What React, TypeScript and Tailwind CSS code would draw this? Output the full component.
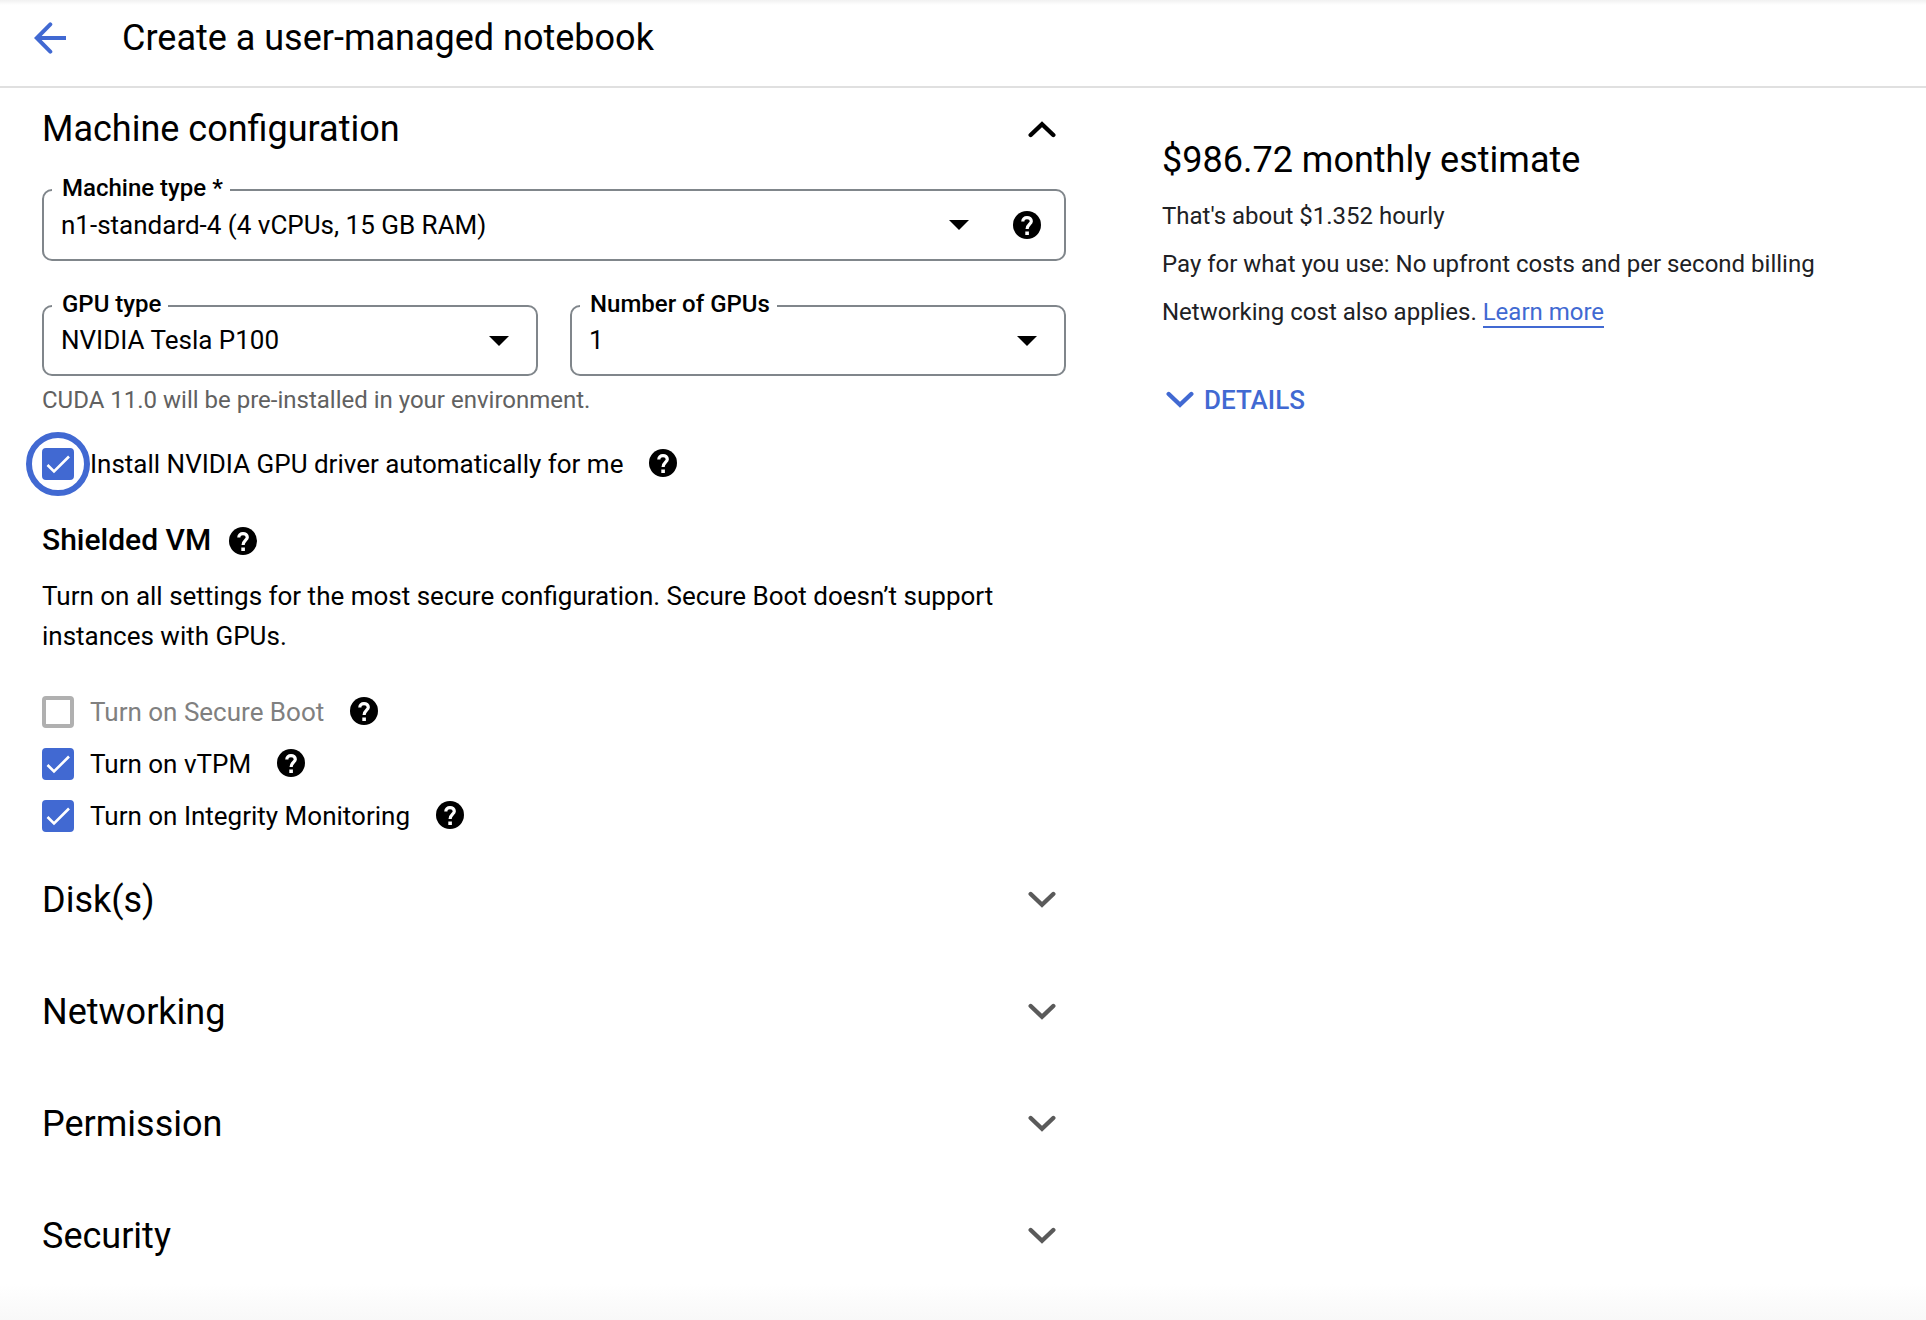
import React, { useId, useState } from "react";

type IconProps = { className?: string };

function ArrowBackIcon({ className = "" }: IconProps) {
  return (
    <svg
      viewBox="0 0 32 32"
      fill="none"
      stroke="currentColor"
      strokeWidth="4"
      aria-hidden="true"
      className={className}
    >
      <path d="M4 16H32" />
      <path d="M16.300 2.300L2.800 16L16.300 29.700" strokeLinecap="round" />
    </svg>
  );
}

function ChevronIcon({ up = false, className = "" }: IconProps & { up?: boolean }) {
  return (
    <svg
      viewBox="0 0 28 18"
      fill="none"
      stroke="currentColor"
      strokeWidth="4.4"
      strokeLinecap="round"
      aria-hidden="true"
      className={className}
    >
      <path d={up ? "M2.700 15L14 4.200L25.300 15" : "M2.700 3L14 13.800L25.300 3"} />
    </svg>
  );
}

function CaretIcon({ className = "" }: IconProps) {
  return (
    <svg viewBox="0 0 20 10" fill="currentColor" aria-hidden="true" className={className}>
      <path d="M0 0l10 10L20 0z" />
    </svg>
  );
}

function HelpButton({ label, className = "" }: { label: string; className?: string }) {
  return (
    <button type="button" aria-label={label} className={`size-7 shrink-0 ${className}`}>
      <svg viewBox="0 0 28 28" fill="none" aria-hidden="true" className="size-7">
        <circle cx="14" cy="14" r="14" fill="currentColor" />
        <path
          d="M9.800 10.600C9.800 8 11.600 6.600 14 6.600S18.300 8 18.300 10.300C18.300 13 14.100 13.600 14.100 18"
          stroke="white"
          strokeWidth="3.2"
        />
        <path d="M12.300 20.500h3.600v3.500h-3.600z" fill="white" />
      </svg>
    </button>
  );
}

function SelectField({ label, options, help }: { label: string; options: string[]; help?: string }) {
  const id = useId();
  return (
    <div
      className={`relative flex items-center rounded-[10px] border-2 border-[#80868b] ${help ? "h-[72px]" : "h-[71px]"}`}
    >
      <label
        htmlFor={id}
        className="absolute -top-[17px] left-2 bg-white pr-[7px] pl-[10px] text-[24px] leading-7 font-medium"
      >
        {label}
      </label>
      <select
        id={id}
        className="h-full w-full min-w-0 cursor-pointer appearance-none bg-transparent pl-[17px] text-[26px] outline-none"
      >
        {options.map((option) => (
          <option key={option}>{option}</option>
        ))}
      </select>
      <CaretIcon
        className={`pointer-events-none h-[10px] w-5 shrink-0 ${help ? "mr-11" : "mr-[27px]"}`}
      />
      {help && <HelpButton label={help} className="mr-[23px]" />}
    </div>
  );
}

type CheckProps = {
  label: string;
  help: string;
  initial?: boolean;
  disabled?: boolean;
  ring?: boolean;
};

function CheckRow({ label, help, initial = false, disabled = false, ring = false }: CheckProps) {
  const id = useId();
  const [checked, setChecked] = useState(initial);
  return (
    <div className="flex h-8 items-center">
      <span className="relative size-8 shrink-0">
        <input
          id={id}
          type="checkbox"
          checked={checked}
          disabled={disabled}
          onChange={(event) => setChecked(event.target.checked)}
          className="block size-8 appearance-none rounded-[4px] border-4 border-[#b0b0b0] checked:border-[#4169d2] checked:bg-[#4169d2]"
        />
        {checked && (
          <svg
            viewBox="0 0 32 32"
            fill="none"
            stroke="white"
            strokeWidth="2.6"
            aria-hidden="true"
            className="pointer-events-none absolute inset-0"
          >
            <path d="M5.500 17l6.500 6.500L27 8.500" />
          </svg>
        )}
        {ring && (
          <span className="pointer-events-none absolute -inset-4 rounded-full border-[6px] border-[#4169d2]" />
        )}
      </span>
      <label
        htmlFor={id}
        className={`ml-4 text-[26px] leading-8 ${disabled ? "text-[#808080]" : "text-black"}`}
      >
        {label}
      </label>
      <HelpButton label={help} className="mb-[2px] ml-[26px]" />
    </div>
  );
}

function SectionHeader({ title, open = false }: { title: string; open?: boolean }) {
  return (
    <h2>
      <button
        type="button"
        aria-expanded={open}
        className="flex w-full items-center justify-between pr-[10px] text-left text-[36px] leading-[48px]"
      >
        {title}
        <ChevronIcon up={open} className={`h-[18px] w-7 ${open ? "text-black" : "text-[#5a5a5a]"}`} />
      </button>
    </h2>
  );
}

const collapsedSections = ["Disk(s)", "Networking", "Permission", "Security"];

export default function App() {
  return (
    <div className="flex min-h-screen flex-col bg-white font-[Roboto,sans-serif] text-black">
      <header className="flex h-[88px] items-center border-b-2 border-[#e0e0e0] bg-[linear-gradient(#f1f1f1,#ffffff_5px)] pb-[10px] pl-[34px]">
        <button type="button" aria-label="Back" className="text-[#4169d2]">
          <ArrowBackIcon className="size-8" />
        </button>
        <h1 className="ml-14 text-[36px] leading-[48px]">Create a user-managed notebook</h1>
      </header>

      <div className="grid grid-cols-[minmax(0,1024px)_minmax(0,1fr)] gap-24 px-[42px] pt-[17px]">
        <main>
          <SectionHeader title="Machine configuration" open />
          <div className="mt-9">
            <SelectField
              label="Machine type *"
              options={["n1-standard-4 (4 vCPUs, 15 GB RAM)"]}
              help="About machine types"
            />
          </div>
          <div className="mt-11 grid grid-cols-2 gap-8">
            <SelectField label="GPU type" options={["NVIDIA Tesla P100"]} />
            <SelectField label="Number of GPUs" options={["1", "2", "4"]} />
          </div>
          <p className="mt-2 text-[24px] leading-8 text-[#616161]">
            CUDA 11.0 will be pre-installed in your environment.
          </p>
          <div className="mt-8">
            <CheckRow
              label="Install NVIDIA GPU driver automatically for me"
              help="About driver installation"
              initial
              ring
            />
          </div>

          <div className="mt-10 flex items-end">
            <h3 className="text-[30px] leading-10 font-medium">Shielded VM</h3>
            <HelpButton label="About Shielded VM" className="mb-[5px] ml-[18px]" />
          </div>
          <p className="mt-4 text-[26px] leading-10">
            Turn on all settings for the most secure configuration. Secure Boot doesn’t support
            instances with GPUs.
          </p>
          <div className="mt-10 flex flex-col gap-5">
            <CheckRow label="Turn on Secure Boot" help="About Secure Boot" disabled />
            <CheckRow label="Turn on vTPM" help="About vTPM" initial />
            <CheckRow label="Turn on Integrity Monitoring" help="About Integrity Monitoring" initial />
          </div>

          <div className="mt-11 flex flex-col gap-16">
            {collapsedSections.map((title) => (
              <SectionHeader key={title} title={title} />
            ))}
          </div>
        </main>

        <aside className="pt-[31px]">
          <h2 className="text-[36px] leading-[48px]">$986.72 monthly estimate</h2>
          <div className="mt-2 text-[24px] leading-[48px] text-[#202124]">
            <p>That's about $1.352 hourly</p>
            <p>Pay for what you use: No upfront costs and per second billing</p>
            <p>
              Networking cost also applies.{" "}
              <a href="#pricing" className="border-b-2 border-[#4169d2] text-[#4169d2]">
                Learn more
              </a>
            </p>
          </div>
          <button
            type="button"
            className="mt-11 flex items-center gap-[10px] pl-1 text-[26px] leading-10 font-medium text-[#4169d2]"
          >
            <ChevronIcon className="h-[18px] w-7" />
            DETAILS
          </button>
        </aside>
      </div>

      <div className="mt-auto h-9 bg-linear-to-b from-white to-[#f8f8f8]" />
    </div>
  );
}
